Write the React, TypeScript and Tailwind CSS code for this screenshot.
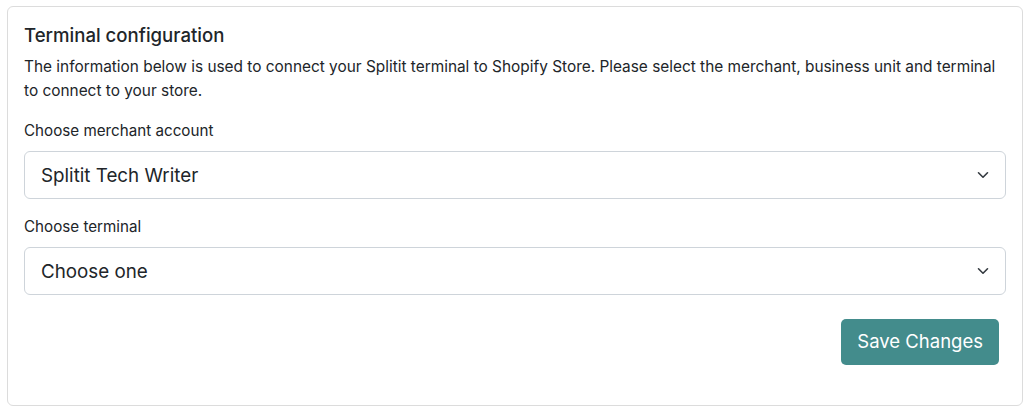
const font = { fontFamily: 'Inter, "Liberation Sans", sans-serif' };

function SelectBox({ value }: { value: string }) {
  return (
    <div className="flex h-[48px] items-center justify-between rounded-[6px] border border-[#ced4da] bg-white pl-4 pr-[15px]">
      <span className="pt-[1px] text-[18.8px] leading-[30px] text-[#212529]">{value}</span>
      <svg width="12" height="8" viewBox="0 0 12 8" className="mr-[1px] text-[#343a40]">
        <path d="M1.5 1.75 6 6.25l4.5-4.5" fill="none" stroke="currentColor" strokeWidth="1.6" strokeLinecap="round" strokeLinejoin="round" />
      </svg>
    </div>
  );
}

export default function App() {
  return (
    <div className="min-h-screen bg-white pl-[7px] pr-[6px] pt-[6px]" style={font}>
      <div className="flex h-[400px] flex-col rounded-[6px] border border-[#dcdcdc] px-4 pt-4 text-[#212529]">
        <h5 className="mb-2 text-[18.6px] font-medium leading-[24px]">Terminal configuration</h5>
        <p className="mb-4 max-w-[980px] text-[15.4px] leading-[24px]">
          The information below is used to connect your Splitit terminal to Shopify Store. Please select the merchant, business unit and terminal to connect to your store.
        </p>
        <label className="mb-2 block text-[15.2px] leading-[24px]">Choose merchant account</label>
        <SelectBox value="Splitit Tech Writer" />
        <label className="mb-2 mt-4 block text-[15.2px] leading-[24px]">Choose terminal</label>
        <SelectBox value="Choose one" />
        <div className="mt-6 flex justify-end pr-[7px]">
          <button className="h-[46px] rounded-[5px] bg-[#438c8c] px-4 text-[18.5px] text-white">Save Changes</button>
        </div>
      </div>
    </div>
  );
}
